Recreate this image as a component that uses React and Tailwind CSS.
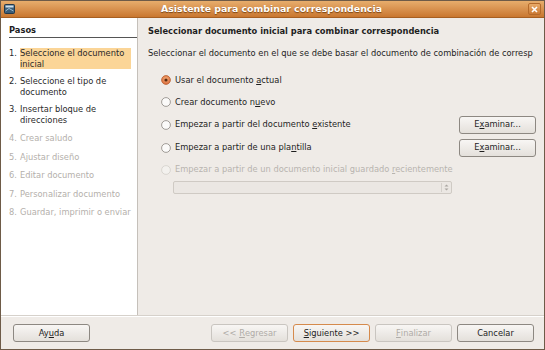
import React from "react";

const F = { fontFamily: '"DejaVu Sans", "Liberation Sans", sans-serif' };

function Radio({ checked, disabled }) {
  return (
    <svg width="10" height="10" viewBox="0 0 10 10" className="shrink-0">
      <defs>
        <radialGradient id="rg" cx="50%" cy="40%" r="60%">
          <stop offset="0%" stopColor="#f6b27a" />
          <stop offset="100%" stopColor="#d9683a" />
        </radialGradient>
      </defs>
      {checked ? (
        <>
          <circle cx="5" cy="5" r="4.4" fill="url(#rg)" stroke="#b8602f" strokeWidth="0.8" />
          <circle cx="5" cy="5" r="1.6" fill="#5a2a10" />
        </>
      ) : (
        <circle cx="5" cy="5" r="4.4" fill={disabled ? "#f3f1ee" : "#fbfaf9"} stroke={disabled ? "#d3cfca" : "#8c8782"} strokeWidth="0.8" />
      )}
    </svg>
  );
}

function Btn({ children, w = "w-[77px]", disabled, primary }) {
  return (
    <div
      className={`${w} h-[18px] flex items-center justify-center rounded-[3px] border text-[8.3px] whitespace-pre bg-gradient-to-b from-[#f8f6f4] to-[#e4e0db] ${
        primary ? "border-[#d58a4c] border-[1.5px]" : disabled ? "border-[#c9c5c0]" : "border-[#8d8882]"
      } ${disabled ? "text-[#b0aca7]" : "text-[#1e1e1e]"}`}
    >
      {children}
    </div>
  );
}

export default function App() {
  const steps = [
    { n: "1.", t: ["Seleccione el documento", "inicial"], active: true, mt: "mt-0" },
    { n: "2.", t: ["Seleccione el tipo de", "documento"], mt: "mt-[7px]" },
    { n: "3.", t: ["Insertar bloque de", "direcciones"], mt: "mt-[7px]" },
    { n: "4.", t: ["Crear saludo"], dis: true, mt: "mt-[8px]" },
    { n: "5.", t: ["Ajustar diseño"], dis: true, mt: "mt-[8px]" },
    { n: "6.", t: ["Editar documento"], dis: true, mt: "mt-[8px]" },
    { n: "7.", t: ["Personalizar documento"], dis: true, mt: "mt-[8px]" },
    { n: "8.", t: ["Guardar, imprimir o enviar"], dis: true, mt: "mt-[8px]" },
  ];
  return (
    <div style={F} className="w-[545px] h-[350px] flex flex-col bg-[#efebe7] border border-[#6e5b48] overflow-hidden text-[#1e1e1e]">
      {/* Title bar */}
      <div className="h-[17px] shrink-0 flex items-center bg-gradient-to-b from-[#e7ad6c] to-[#c9772f] border-b border-[#a65f22] px-[3px]">
        <svg width="11" height="10" viewBox="0 0 11 10" className="shrink-0">
          <rect x="0.5" y="0.5" width="10" height="9" rx="1" fill="#3b5d78" stroke="#22384a" />
          <rect x="1.5" y="1.5" width="8" height="2" fill="#cfe0ea" />
          <path d="M1.5 7 L5 4.5 L9.5 7" stroke="#9cc0d6" fill="none" />
        </svg>
        <div className="flex-1 text-center text-white text-[9.4px] font-bold [text-shadow:0_1px_1px_#7a4413]">
          Asistente para combinar correspondencia
        </div>
        <div className="w-[13px] h-[12px] rounded-[2px] border border-[#b56a2a] bg-gradient-to-b from-[#e9ab69] to-[#cc7a34] flex items-center justify-center">
          <svg width="7" height="7" viewBox="0 0 7 7">
            <path d="M1 1 L6 6 M6 1 L1 6" stroke="#fff" strokeWidth="1.6" />
          </svg>
        </div>
      </div>

      {/* Main */}
      <div className="flex-1 flex min-h-0 border-b border-[#d6d1cb]">
        <div className="w-[137px] shrink-0 bg-white border-r border-[#c5c0ba] pt-[7px]">
          <div className="ml-[8px] border-b border-[#555] text-[8.3px] font-bold leading-[11px] pb-[1px]">Pasos</div>
          <div className="mt-[10px] flex flex-col">
            {steps.map((s, i) => (
              <div key={i} className={`${s.mt} flex text-[8.3px] leading-[10.5px] pl-[8px] whitespace-nowrap ${s.dis ? "text-[#b4b0ab]" : "text-[#2a2a2a]"}`}>
                <span className="w-[11px] shrink-0">{s.n}</span>
                <div className={`flex-1 mr-[6px] ${s.active ? "bg-[#fbd597]" : ""}`}>
                  {s.t.map((l, j) => (
                    <div key={j}>{l}</div>
                  ))}
                </div>
              </div>
            ))}
          </div>
        </div>

        <div className="flex-1 pl-[10px] pr-[8px] pt-[8px] min-w-0">
          <div className="text-[8.3px] font-bold leading-[11px] whitespace-nowrap">
            Seleccionar documento inicial para combinar correspondencia
          </div>
          <div className="mt-[11px] text-[8.3px] leading-[11px] whitespace-nowrap overflow-hidden">
            Seleccionar el documento en el que se debe basar el documento de combinación de corresp
          </div>
          <div className="mt-[10px] pl-[13px] flex flex-col text-[8.3px]">
            <div className="h-[22px] flex items-center gap-[4px]">
              <Radio checked />
              <span>Usar el documento <u>a</u>ctual</span>
            </div>
            <div className="h-[22px] flex items-center gap-[4px]">
              <Radio />
              <span>Crear documento n<u>u</u>evo</span>
            </div>
            <div className="h-[23px] flex items-center justify-between">
              <div className="flex items-center gap-[4px]">
                <Radio />
                <span>Empezar a partir del documento <u>e</u>xistente</span>
              </div>
              <Btn>E<u>x</u>aminar...</Btn>
            </div>
            <div className="h-[23px] flex items-center justify-between">
              <div className="flex items-center gap-[4px]">
                <Radio />
                <span>Empezar a partir de una pla<u>n</u>tilla</span>
              </div>
              <Btn>E<u>x</u>aminar...</Btn>
            </div>
            <div className="h-[21px] flex items-center gap-[4px] text-[#b8b4af]">
              <Radio disabled />
              <span>Empezar a partir de un documento inicial guardado <u>r</u>ecientemente</span>
            </div>
            <div className="mt-[1px] ml-[12px] w-[279px] h-[13px] rounded-[2px] border border-[#cfcac4] bg-[#ebe7e3] flex justify-end items-center">
              <div className="h-[9px] w-[10px] border-l border-[#d4d0cb] flex items-center justify-center">
                <svg width="5" height="7" viewBox="0 0 5 7">
                  <path d="M0.5 2.6 L2.5 0.6 L4.5 2.6 Z M0.5 4.4 L2.5 6.4 L4.5 4.4 Z" fill="#aaa6a1" />
                </svg>
              </div>
            </div>
          </div>
        </div>
      </div>

      {/* Bottom */}
      <div className="h-[33px] shrink-0 flex items-center pl-[12px] pr-[10px] border-t border-white">
        <Btn>Ay<u>u</u>da</Btn>
        <div className="flex-1" />
        <div className="flex items-center gap-[5px]">
          <Btn disabled>{"<< "}<u>R</u>egresar</Btn>
          <Btn primary>
            <u>S</u>iguiente{" >>"}
          </Btn>
          <Btn disabled>
            <u>F</u>inalizar
          </Btn>
          <Btn>Cancelar</Btn>
        </div>
      </div>
    </div>
  );
}
